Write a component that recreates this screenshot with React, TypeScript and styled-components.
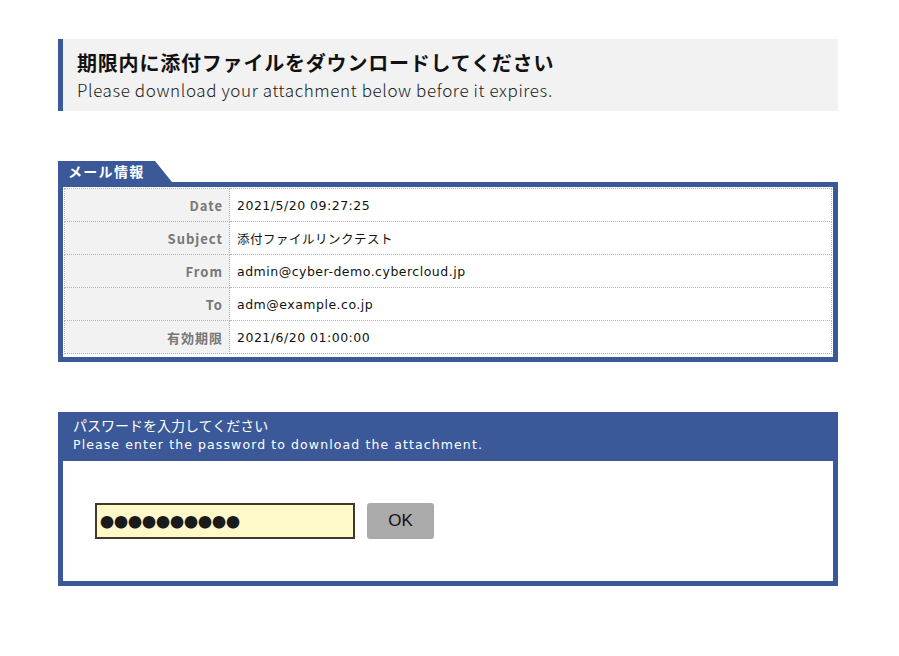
import React from "react";
import styled, { createGlobalStyle } from "styled-components";

const Global = createGlobalStyle`
    body {
        margin: 0;
        background: #ffffff;
        font-family: "Noto Sans CJK JP", "Liberation Sans", sans-serif;
        color: #000;
    }
`;

const BLUE = "#3b5998";

const Page = styled.div`
    width: 780px;
    margin-left: 58px;
    padding-top: 39px;
    padding-bottom: 70px;
`;

const Notice = styled.div`
    background: #f2f2f2;
    border-left: 5px solid ${BLUE};
    height: 72px;
    padding: 10px 0 0 14px;
    box-sizing: border-box;
`;

const NoticeTitle = styled.h1`
    margin: 0;
    font-size: 20px;
    line-height: 28px;
    font-weight: 700;
    letter-spacing: 0.8px;
    color: #111;
`;

const NoticeSub = styled.p`
    margin: 2px 0 0;
    font-size: 17px;
    line-height: 22px;
    font-weight: 300;
    letter-spacing: 0.6px;
    color: #222;
`;

const Section = styled.section`
    margin-top: 50px;
`;

const Tab = styled.div`
    width: 114px;
    height: 21px;
    background: ${BLUE};
    color: #fff;
    font-size: 14px;
    font-weight: 700;
    line-height: 21px;
    padding-left: 10px;
    box-sizing: border-box;
    letter-spacing: 1.3px;
    clip-path: polygon(0 0, 97px 0, 114px 21px, 0 21px);
`;

const InfoBox = styled.div`
    border: 5px solid ${BLUE};
    padding: 1px 1px 3px 1px;
`;

const InfoTable = styled.table`
    width: 100%;
    border-collapse: collapse;
    border: 1px dotted #b5b5b5;
`;

const Row = styled.tr`
    height: 33px;
`;

const Label = styled.th`
    width: 165px;
    box-sizing: border-box;
    background: #f2f2f2;
    color: #777;
    font-size: 13px;
    font-weight: 700;
    letter-spacing: 1px;
    text-align: right;
    padding: 0 6px 0 0;
    border: 1px dotted #b5b5b5;
`;

const Value = styled.td`
    font-family: "DejaVu Sans", "Noto Sans CJK JP", sans-serif;
    font-size: 12.5px;
    letter-spacing: 0.5px;
    color: #111;
    padding: 0 0 0 7px;
    border: 1px dotted #b5b5b5;
`;

const PassHead = styled.div`
    background: ${BLUE};
    color: #fff;
    height: 49px;
    padding: 4px 0 0 15px;
    box-sizing: border-box;
`;

const PassTitle = styled.div`
    font-size: 14px;
    line-height: 18px;
`;

const PassSub = styled.div`
    font-family: "DejaVu Sans", "Noto Sans CJK JP", sans-serif;
    font-size: 12.5px;
    line-height: 22px;
    letter-spacing: 1.1px;
`;

const PassBody = styled.div`
    border: 5px solid ${BLUE};
    border-top: none;
    height: 125px;
    box-sizing: border-box;
    display: flex;
    align-items: center;
    gap: 12px;
    padding-left: 32px;
`;

const PassInput = styled.input`
    width: 260px;
    height: 36px;
    box-sizing: border-box;
    border: 2px solid #3f3a2c;
    background: #fff8c8;
    padding: 0 3px;
    font-family: "Noto Sans CJK JP", sans-serif;
    font-size: 14px;
    letter-spacing: 0;
    color: #1a1a1a;
    outline: none;
`;

const OkButton = styled.button`
    width: 67px;
    height: 36px;
    border: none;
    border-radius: 3px;
    background: #aaaaaa;
    color: #111;
    font-size: 17px;
    font-family: "Liberation Sans", sans-serif;
    cursor: pointer;
`;

const rows: [string, string][] = [
    ["Date", "2021/5/20 09:27:25"],
    ["Subject", "添付ファイルリンクテスト"],
    ["From", "admin@cyber-demo.cybercloud.jp"],
    ["To", "adm@example.co.jp"],
    ["有効期限", "2021/6/20 01:00:00"],
];

const App = () => {
    return (
        <>
            <Global />
            <Page>
                <Notice>
                    <NoticeTitle>期限内に添付ファイルをダウンロードしてください</NoticeTitle>
                    <NoticeSub>Please download your attachment below before it expires.</NoticeSub>
                </Notice>

                <Section>
                    <Tab>メール情報</Tab>
                    <InfoBox>
                        <InfoTable>
                            <tbody>
                                {rows.map(([k, v]) => (
                                    <Row key={k}>
                                        <Label>{k}</Label>
                                        <Value>{v}</Value>
                                    </Row>
                                ))}
                            </tbody>
                        </InfoTable>
                    </InfoBox>
                </Section>

                <Section>
                    <PassHead>
                        <PassTitle>パスワードを入力してください</PassTitle>
                        <PassSub>Please enter the password to download the attachment.</PassSub>
                    </PassHead>
                    <PassBody>
                        <PassInput type="text" readOnly aria-label="password" value={"●".repeat(10)} />
                        <OkButton>OK</OkButton>
                    </PassBody>
                </Section>
            </Page>
        </>
    );
};

export default App;
